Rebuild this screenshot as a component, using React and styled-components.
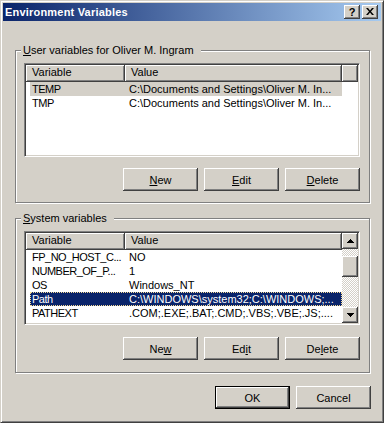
import React from "react";
import styled, { createGlobalStyle } from "styled-components";

const userVars = [
  ["TEMP", "C:\\Documents and Settings\\Oliver M. In..."],
  ["TMP", "C:\\Documents and Settings\\Oliver M. In..."],
];

const systemVars = [
  ["FP_NO_HOST_C...", "NO"],
  ["NUMBER_OF_P...", "1"],
  ["OS", "Windows_NT"],
  ["Path", "C:\\WINDOWS\\system32;C:\\WINDOWS;..."],
  ["PATHEXT", ".COM;.EXE;.BAT;.CMD;.VBS;.VBE;.JS;...."],
];

export default function App() {
  return (
    <>
      <Global />
      <Window>
        <Caption>
          <Title>Environment Variables</Title>
          <CapButtons>
            <CapButton>?</CapButton>
            <CapButton>
              <svg width="8" height="7" viewBox="0 0 8 7">
                <path d="M0 0h2l2 2.4L6 0h2L5 3.5 8 7H6L4 4.6 2 7H0l3-3.5z" fill="#000" />
              </svg>
            </CapButton>
          </CapButtons>
        </Caption>

        <Body>
          <Group $h={153}>
            <Legend>
              <Key>U</Key>ser variables for Oliver M. Ingram
            </Legend>
            <ListView rows={userVars} selected={0} focused={false} />
            <ButtonRow $top={11}>
              <Button><Key>N</Key>ew</Button>
              <Button><Key>E</Key>dit</Button>
              <Button><Key>D</Key>elete</Button>
            </ButtonRow>
          </Group>

          <Group $h={155} $top={15}>
            <Legend>
              <Key>S</Key>ystem variables
            </Legend>
            <ListView rows={systemVars} selected={3} focused scroll />
            <ButtonRow $top={12}>
              <Button>Ne<Key>w</Key></Button>
              <Button>Ed<Key>i</Key>t</Button>
              <Button>De<Key>l</Key>ete</Button>
            </ButtonRow>
          </Group>

          <DialogButtons>
            <Button $default>OK</Button>
            <Button>Cancel</Button>
          </DialogButtons>
        </Body>
      </Window>
    </>
  );
}

function ListView({ rows, selected, focused, scroll }) {
  return (
    <Sunken>
      <ListMain>
        <Header>
          <HeadCell $w={99}>Variable</HeadCell>
          <HeadCell $w={217}>Value</HeadCell>
          {!scroll && <HeadCell $fill />}
        </Header>
        {rows.map((r, i) => (
          <Row
            key={r[0] + i}
            $state={i === selected ? (focused ? "active" : "inactive") : "none"}
          >
            <NameCell>{r[0]}</NameCell>
            <ValueCell>{r[1]}</ValueCell>
          </Row>
        ))}
      </ListMain>
      {scroll && (
        <ScrollBar>
          <ScrollButton>
            <svg width="7" height="4" viewBox="0 0 7 4" shapeRendering="crispEdges">
              <path d="M3 0h1v1h1v1h1v1h1v1H0V3h1V2h1V1h1z" fill="#000" />
            </svg>
          </ScrollButton>
          <Track>
            <Thumb />
          </Track>
          <ScrollButton>
            <svg width="7" height="4" viewBox="0 0 7 4" shapeRendering="crispEdges">
              <path d="M0 0h7v1H6v1H5v1H4v1H3V3H2V2H1V1H0z" fill="#000" />
            </svg>
          </ScrollButton>
        </ScrollBar>
      )}
    </Sunken>
  );
}

const Global = createGlobalStyle`
  html, body { margin: 0; padding: 0; background: #d4d0c8; }
  body {
    font-family: "Liberation Sans", Arial, sans-serif;
    font-size: 11px;
    color: #000;
  }
`;

const raised = `
  box-shadow: inset -1px -1px #404040, inset 1px 1px #fff,
    inset -2px -2px #808080, inset 2px 2px #d4d0c8;
`;

const Window = styled.div`
  width: 384px;
  height: 423px;
  box-sizing: border-box;
  background: #d4d0c8;
  border: 1px solid;
  border-color: #d4d0c8 #404040 #404040 #d4d0c8;
  box-shadow: inset 1px 1px #fff, inset -1px -1px #808080;
  padding: 2px;
  display: flex;
  flex-direction: column;
`;

const Caption = styled.div`
  height: 18px;
  display: flex;
  align-items: center;
  padding: 0 3px 0 2px;
  background: linear-gradient(to right, #0a246a, #a6caf0);
`;

const Title = styled.span`
  flex: 1;
  color: #fff;
  font-weight: bold;
  font-size: 11px;
  line-height: 18px;
  letter-spacing: 0.2px;
`;

const CapButtons = styled.div`
  display: flex;
  gap: 2px;
`;

const CapButton = styled.div`
  width: 16px;
  height: 14px;
  box-sizing: border-box;
  background: #d4d0c8;
  ${raised}
  display: flex;
  align-items: center;
  justify-content: center;
  font-weight: bold;
  font-size: 11px;
  line-height: 14px;
  padding-bottom: 1px;
`;

const Body = styled.div`
  padding: 29px 0 0 12px;
  display: flex;
  flex-direction: column;
`;

const Group = styled.div`
  position: relative;
  width: 355px;
  height: ${(p) => p.$h}px;
  margin-top: ${(p) => p.$top || 0}px;
  box-sizing: border-box;
  border: 1px solid #808080;
  box-shadow: inset 1px 1px #fff, 1px 1px #fff;
  padding: 12px 9px 0 8px;
`;

const Legend = styled.div`
  position: absolute;
  top: -7px;
  left: 5px;
  padding: 0 7px 0 2px;
  background: #d4d0c8;
  line-height: 13px;
  white-space: nowrap;
`;

const Key = styled.span`
  text-decoration: underline;
`;

const Sunken = styled.div`
  width: 336px;
  height: 94px;
  box-sizing: border-box;
  border: 1px solid;
  border-color: #808080 #fff #fff #808080;
  box-shadow: inset 1px 1px #404040, inset -1px -1px #d4d0c8;
  padding: 1px;
  display: flex;
  overflow: hidden;
`;

const ListMain = styled.div`
  flex: 1;
  min-width: 0;
  background: #fff;
  display: flex;
  flex-direction: column;
`;

const Header = styled.div`
  display: flex;
  height: 17px;
  flex-shrink: 0;
`;

const HeadCell = styled.div`
  ${(p) => (p.$fill ? "flex: 1;" : `width: ${p.$w}px;`)}
  box-sizing: border-box;
  height: 17px;
  background: #d4d0c8;
  border-right: 1px solid #404040;
  border-bottom: 1px solid #404040;
  box-shadow: inset 1px 1px #fff, inset -1px -1px #808080;
  padding-left: 6px;
  line-height: 15px;
  white-space: nowrap;
`;

const rowColors = {
  none: "background: transparent; color: #000;",
  inactive: "background: #d4d0c8; color: #000;",
  active:
    "background: #0a246a; color: #fff; outline: 1px dotted #f5db95; outline-offset: -1px;",
};

const Row = styled.div`
  display: flex;
  margin-left: 4px;
  width: 312px;
  height: 14px;
  line-height: 14px;
  white-space: nowrap;
  ${(p) => rowColors[p.$state]}
`;

const NameCell = styled.div`
  width: 95px;
  box-sizing: border-box;
  padding-left: 2px;
  letter-spacing: -0.5px;
`;

const ValueCell = styled.div`
  flex: 1;
  padding-left: 4px;
  overflow: hidden;
`;

const ScrollBar = styled.div`
  width: 16px;
  display: flex;
  flex-direction: column;
`;

const ScrollButton = styled.div`
  width: 16px;
  height: 16px;
  flex-shrink: 0;
  box-sizing: border-box;
  background: #d4d0c8;
  ${raised}
  display: flex;
  align-items: center;
  justify-content: center;
`;

const Track = styled.div`
  flex: 1;
  background: repeating-conic-gradient(#fff 0 25%, #d4d0c8 0 50%) 0 0 / 2px 2px;
  padding-top: 7px;
`;

const Thumb = styled.div`
  height: 21px;
  background: #d4d0c8;
  ${raised}
`;

const ButtonRow = styled.div`
  display: flex;
  justify-content: flex-end;
  gap: 6px;
  margin-top: ${(p) => p.$top}px;
`;

const DialogButtons = styled.div`
  width: 356px;
  display: flex;
  justify-content: flex-end;
  gap: 6px;
  margin-top: 13px;
`;

const Button = styled.div`
  width: 75px;
  height: 23px;
  box-sizing: border-box;
  background: #d4d0c8;
  display: flex;
  align-items: center;
  justify-content: center;
  white-space: nowrap;
  ${raised}
  ${(p) => (p.$default ? "border: 1px solid #000;" : "")}
`;
